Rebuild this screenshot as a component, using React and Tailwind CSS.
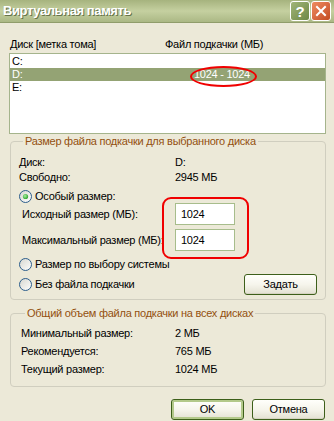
import React from 'react';

const Radio = ({ checked }) => (
    <svg width="13" height="13" viewBox="0 0 13 13" className="shrink-0">
        <defs>
            <linearGradient id="radioFace" x1="0" y1="0" x2="1" y2="1">
                <stop offset="0" stopColor="#d6d6cf" />
                <stop offset="1" stopColor="#ffffff" />
            </linearGradient>
            <radialGradient id="radioDot" cx="0.4" cy="0.4" r="0.7">
                <stop offset="0" stopColor="#a6f0a0" />
                <stop offset="1" stopColor="#1f9a1f" />
            </radialGradient>
        </defs>
        <circle cx="6.5" cy="6.5" r="6" fill="url(#radioFace)" stroke="#2c5d8a" strokeWidth="1" />
        {checked && <circle cx="6.5" cy="6.5" r="2.6" fill="url(#radioDot)" />}
    </svg>
);

const XpButton = ({ children, isDefault }) => (
    <button
        className={
            'w-[73px] h-[21px] rounded-[3px] border border-[#3d5f1a] bg-linear-to-b from-[#fffffb] via-[#f6f5ec] to-[#e3e1d2] text-[11px] leading-none text-black ' +
            (isDefault ? 'shadow-[inset_0_0_0_2px_#b3c98a]' : 'shadow-[inset_0_-1px_0_#d6d3c2]')
        }
    >
        {children}
    </button>
);

const TextBox = ({ value }) => (
    <div className="w-[60px] h-[22px] border border-[#a7bd8c] bg-white pl-[5px] flex items-center">{value}</div>
);

const Legend = ({ children }) => (
    <legend className="ml-[4px] px-[2px] leading-[13px] text-[#93500f]">{children}</legend>
);

export default function App() {
    return (
        <div className="w-[334px] h-[421px] overflow-hidden bg-[#ece9d8] text-[11px] tracking-[-0.25px] text-black font-['Liberation_Sans',Arial,sans-serif]">
            {/* title bar */}
            <div className="h-[23px] flex items-center justify-between pl-[3px] pr-[3px] bg-linear-to-b from-[#a6b37e] via-[#c5d0a0] to-[#abb885] border-b border-[#909d6b]">
                <span className="font-bold text-[13px] tracking-[-0.4px] text-white [text-shadow:1px_1px_0_#66744a]">Виртуальная память</span>
                <div className="flex gap-[1px]">
                    <div className="w-[20px] h-[20px] rounded-[3px] border border-white bg-linear-to-br from-[#a1b579] to-[#6e8844] flex items-center justify-center text-white font-bold text-[15px] leading-none">?</div>
                    <div className="w-[20px] h-[20px] rounded-[3px] border border-white bg-linear-to-br from-[#ee8c62] to-[#c44a1f] flex items-center justify-center">
                        <svg width="12" height="12" viewBox="0 0 12 12">
                            <path d="M2 2 L10 10 M10 2 L2 10" stroke="white" strokeWidth="2" strokeLinecap="square" />
                        </svg>
                    </div>
                </div>
            </div>

            <div className="pl-[9px] pr-[8px] pt-[15px]">
                {/* column headers */}
                <div className="grid grid-cols-[155px_1fr] pl-[1px] h-[13px] leading-[13px]">
                    <span>Диск [метка тома]</span>
                    <span>Файл подкачки (МБ)</span>
                </div>

                {/* drive list */}
                <div className="mt-[2px] h-[81px] border border-[#a5b48c] bg-white pt-[1px]">
                    {[
                        { d: 'C:', size: '' },
                        { d: 'D:', size: '1024 - 1024', sel: true },
                        { d: 'E:', size: '' },
                    ].map(row => (
                        <div
                            key={row.d}
                            className={'grid grid-cols-[182px_1fr] pl-[2px] h-[13px] leading-[13px] ' + (row.sel ? 'bg-[#94a374] text-white' : '')}
                        >
                            <span>{row.d}</span>
                            <span className="relative">
                                {row.size}
                                {row.sel && (
                                    <span className="absolute left-[-4px] top-[-2px] w-[67px] h-[21px] rounded-[50%] border-2 border-[#f00000]" />
                                )}
                            </span>
                        </div>
                    ))}
                </div>

                {/* selected drive group */}
                <fieldset className="mt-[1px] ml-[1px] border border-[#d0cebf] rounded-[4px] pt-[6px] pl-[8px] pr-[8px] pb-[4px]">
                    <Legend>Размер файла подкачки для выбранного диска</Legend>
                    <div className="grid grid-cols-[156px_1fr] h-[15px] items-center">
                        <span>Диск:</span>
                        <span>D:</span>
                    </div>
                    <div className="grid grid-cols-[156px_1fr] h-[15px] items-center">
                        <span>Свободно:</span>
                        <span>2945 МБ</span>
                    </div>
                    <div className="mt-[5px] h-[14px] flex items-center gap-[3px]">
                        <Radio checked />
                        <span>Особый размер:</span>
                    </div>

                    <div className="relative">
                        <div className="grid grid-cols-[156px_1fr] h-[22px] items-center">
                            <span className="pl-[3px]">Исходный размер (МБ):</span>
                            <TextBox value="1024" />
                        </div>
                        <div className="mt-[4px] grid grid-cols-[156px_1fr] h-[22px] items-center">
                            <span className="pl-[3px]">Максимальный размер (МБ):</span>
                            <TextBox value="1024" />
                        </div>
                        {/* red marker around inputs */}
                        <div className="absolute left-[143px] top-[-6px] w-[87px] h-[62px] rounded-[9px] border-2 border-[#f00000]" />
                    </div>

                    <div className="mt-[6px] h-[14px] flex items-center gap-[3px]">
                        <Radio />
                        <span>Размер по выбору системы</span>
                    </div>
                    <div className="mt-[3px] h-[21px] flex items-center justify-between">
                        <div className="flex items-center gap-[3px]">
                            <Radio />
                            <span>Без файла подкачки</span>
                        </div>
                        <XpButton>Задать</XpButton>
                    </div>
                </fieldset>

                {/* totals group */}
                <fieldset className="mt-[7px] ml-[1px] border border-[#d0cebf] rounded-[4px] pt-[4px] pl-[10px] pr-[8px] pb-[8px]">
                    <Legend>Общий объем файла подкачки на всех дисках</Legend>
                    {[
                        ['Минимальный размер:', '2 МБ'],
                        ['Рекомендуется:', '765 МБ'],
                        ['Текущий размер:', '1024 МБ'],
                    ].map(([k, v]) => (
                        <div key={k} className="grid grid-cols-[154px_1fr] h-[18px] items-center">
                            <span>{k}</span>
                            <span>{v}</span>
                        </div>
                    ))}
                </fieldset>

                <div className="mt-[12px] flex justify-end gap-[8px] pr-[1px]">
                    <XpButton isDefault>OK</XpButton>
                    <XpButton>Отмена</XpButton>
                </div>
            </div>
        </div>
    );
}
